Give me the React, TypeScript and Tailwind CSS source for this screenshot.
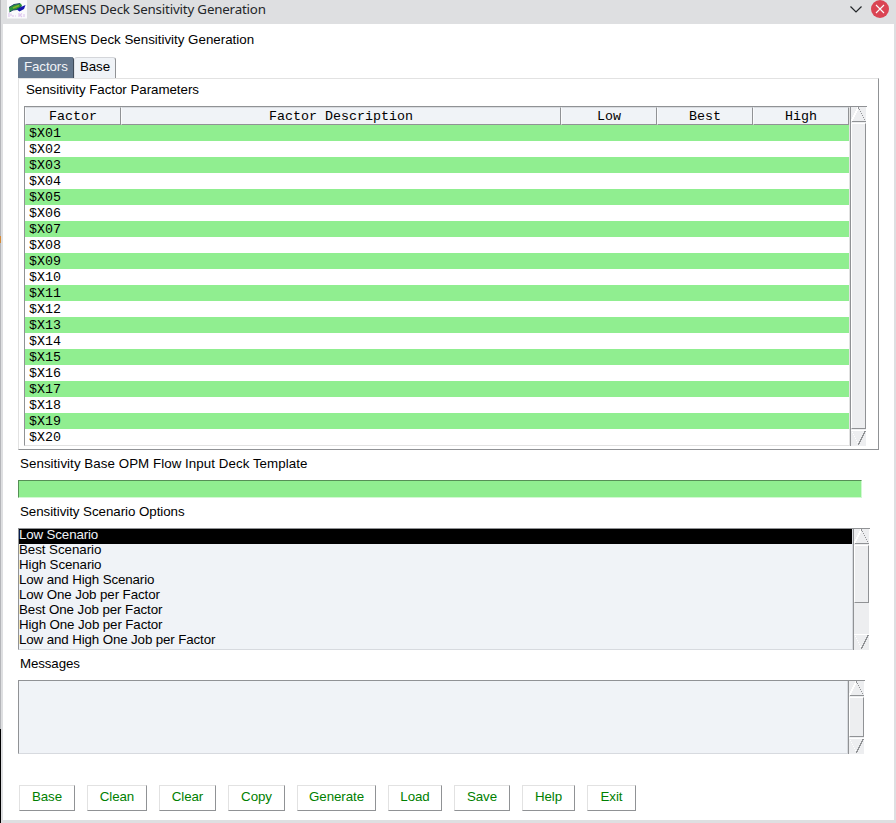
import React from "react";

const sans = "font-['Liberation_Sans',Arial,sans-serif] text-[13.33px] leading-[15px] whitespace-pre";
const mono = "font-['Liberation_Mono','Courier_New',monospace] text-[13.33px] whitespace-pre";

const factors = Array.from({ length: 20 }, (_, i) => "$X" + String(i + 1).padStart(2, "0"));

const columns = [
  { name: "Factor", width: "w-24" },
  { name: "Factor Description", width: "w-[440px]" },
  { name: "Low", width: "w-24" },
  { name: "Best", width: "w-24" },
  { name: "High", width: "w-24" },
];

const scenarios = [
  { name: "Low Scenario", spacing: "tracking-[-0.14px]" },
  { name: "Best Scenario", spacing: "tracking-[-0.05px]" },
  { name: "High Scenario", spacing: "tracking-[-0.1px]" },
  { name: "Low and High Scenario", spacing: "tracking-[-0.12px]" },
  { name: "Low One Job per Factor", spacing: "tracking-[-0.1px]" },
  { name: "Best One Job per Factor", spacing: "tracking-[-0.08px]" },
  { name: "High One Job per Factor", spacing: "tracking-[-0.11px]" },
  { name: "Low and High One Job per Factor", spacing: "tracking-[-0.12px]" },
];

const buttons = [
  { name: "Base", width: "w-14" },
  { name: "Clean", width: "w-[60px]" },
  { name: "Clear", width: "w-[57px]" },
  { name: "Copy", width: "w-[57px]" },
  { name: "Generate", width: "w-[79px]" },
  { name: "Load", width: "w-[54px]" },
  { name: "Save", width: "w-14" },
  { name: "Help", width: "w-[53px]" },
  { name: "Exit", width: "w-[49px]" },
];

const steps = [0, 1, 2, 3, 4, 5, 6];

function UpArrow() {
  return (
    <svg className="block shrink-0" width="15" height="15" viewBox="0 0 15 15" shapeRendering="crispEdges">
      {steps.map((k) => (
        <React.Fragment key={k}>
          <rect x={6 - k} y={2 * k} width="2" height="2" fill="#fff" />
          <rect x={7 + k} y={2 * k} width="1" height="1" fill="#909295" />
        </React.Fragment>
      ))}
      <rect x="7" y="0" width="1" height="2" fill="#909295" />
      <rect x="1" y="14" width="14" height="1" fill="#909295" />
    </svg>
  );
}

function DownArrow() {
  return (
    <svg className="block shrink-0" width="15" height="14" viewBox="0 0 15 14" shapeRendering="crispEdges">
      {steps.map((k) => (
        <React.Fragment key={k}>
          <rect x={1 + k} y={2 * k + 1} width="1" height="1" fill="#fff" />
          <rect x={13 - k} y={2 * k} width="1" height="2" fill="#909295" />
          <rect x={14 - k} y={2 * k} width="1" height="1" fill="#909295" />
        </React.Fragment>
      ))}
    </svg>
  );
}

function ScrollBar({ thumb }: { thumb: string }) {
  return (
    <div className="flex w-[17px] shrink-0 border-l border-[#909295]">
      <div className="flex w-[15px] flex-col justify-between bg-[#edeef0]">
        <div>
          <UpArrow />
          <div className={`mt-px border border-b-[#909295] border-l-white border-r-[#909295] border-t-white ${thumb}`} />
        </div>
        <div className="border-t border-white pb-px">
          <DownArrow />
        </div>
      </div>
    </div>
  );
}

function Logo() {
  return (
    <svg className="block" width="20" height="19" viewBox="0 0 20 19">
      <path d="M0 0H20V18.500H0Z" fill="#fafafc" />
      <path d="M2 7.500 7 4.500 14 3.500 15 6 11 9.500 6 10 2.500 12Z" fill="#2b9638" />
      <path d="M2 7.500 7 4.500 13 3.500" fill="none" stroke="#22496a" strokeWidth="1" />
      <path d="M6 8 12 5.500" stroke="#86b22c" strokeWidth="1.600" />
      <path d="M10 8.500 14 7 18.500 5 17 9 12.500 11.500 10.500 10Z" fill="#1515b0" />
      <path d="M2.500 12 6 10 10 9.500 14.500 6" fill="none" stroke="#1c4d60" strokeWidth="1" />
      <path d="M2 13V17M4 13.500V16M6 15V17M8 16H9M12 17V13M15 17 13 15 15 13.500M17 17V14" fill="none" stroke="#dfc9ef" strokeWidth="1.200" />
    </svg>
  );
}

function Tab({ label, active }: { label: string; active?: boolean }) {
  return active ? (
    <div className={`${sans} h-[21px] w-14 rounded-t-[3px] border-r border-[#3f4b59] bg-[#64778d] pl-1.5 pt-[2px] tracking-[-0.1px] text-[#f0f3f7]`}>{label}</div>
  ) : (
    <div className={`${sans} h-[21px] w-[42px] rounded-t-[3px] border-l border-r border-t border-l-[#e0e2e6] border-r-[#909295] border-t-[#d4d6da] bg-[#f0f3f7] pl-[5px] pt-px tracking-[-0.1px] text-black`}>{label}</div>
  );
}

export default function App() {
  return (
    <div className="flex h-[823px] w-[896px] overflow-hidden bg-[#dedfe1]">
      <div className="flex w-px shrink-0 flex-col">
        <div className="h-[236px] bg-[#b4b5b9]" />
        <div className="h-[7px] bg-[#d48a38]" />
        <div className="h-[486px] bg-[#b4b5b9]" />
        <div className="grow bg-black" />
      </div>
      <div className="flex grow flex-col">
        <header className="flex h-6 shrink-0 items-start">
          <div className="pl-[6px]">
            <Logo />
          </div>
          <div className="grow whitespace-pre pl-2 font-['Noto_Sans',sans-serif] text-[13.33px] leading-[19px] tracking-[-0.18px] text-[#232629]">OPMSENS Deck Sensitivity Generation</div>
          <svg className="block" width="46" height="20" viewBox="0 0 46 20" fill="none">
            <path d="M.5 6.500 6 12 11.500 6.500" stroke="#232629" strokeWidth="1.2" />
            <circle cx="30" cy="9" r="9" fill="#da4453" />
            <path d="M26 5 34 13M34 5 26 13" stroke="#fcfcfc" strokeWidth="1.1" />
          </svg>
        </header>
        <main className="ml-[2px] mr-[2px] flex h-[796px] shrink-0 flex-col items-start bg-white pl-[15px] text-black">
          <div className={`${sans} mt-2 pl-[2px]`}>OPMSENS Deck Sensitivity Generation</div>
          <div className="mt-[10px] flex h-[21px]">
            <Tab label="Factors" active />
            <Tab label="Base" />
          </div>
          <section className="h-[372px] w-[861px] border border-b-[#909295] border-l-[#e2e2e2] border-r-[#909295] border-t-[#e2e2e2] pl-[5px] pt-[3px]">
            <div className={`${sans} h-6 pl-[2px] tracking-[-0.04px]`}>Sensitivity Factor Parameters</div>
            <div className="flex h-[340px] w-[843px] border-t border-[#909295]">
              <div className="w-[826px] shrink-0 border-b border-l border-r border-b-[#e2e2e2] border-l-[#909295] border-r-[#e2e2e2]">
                <div className="flex h-[18px]">
                  {columns.map((c) => (
                    <div key={c.name} className={`${mono} ${c.width} shrink-0 border border-b-[#909295] border-l-[#fafbfd] border-r-[#909295] border-t-[#d9dce0] bg-[#f0f3f7] text-center leading-[18px]`}>{c.name}</div>
                  ))}
                </div>
                {factors.map((f, i) => (
                  <div key={f} className={`${mono} h-4 pl-1 leading-[18px] ${i % 2 === 0 ? "bg-[#90ee90]" : "bg-white"}`}>{f}</div>
                ))}
              </div>
              <ScrollBar thumb="h-[306px]" />
            </div>
          </section>
          <div className={`${sans} mt-[6px] pl-[2px] tracking-[0.055px]`}>Sensitivity Base OPM Flow Input Deck Template</div>
          <div className="mt-[9px] h-[18px] w-[844px] border border-b-[#d2f8d2] border-l-[#568f56] border-r-[#d2f8d2] border-t-[#568f56] bg-[#90ee90]" />
          <div className={`${sans} mt-[6px] pl-[2px] tracking-[-0.05px]`}>Sensitivity Scenario Options</div>
          <div className="mt-[9px] flex h-[122px] w-[852px] border-t border-[#909295]">
            <div className="w-[835px] shrink-0 border-b border-l border-r border-b-[#d7dadf] border-l-[#909295] border-r-[#d7dadf] bg-[#f0f3f7]">
              {scenarios.map((s, i) => (
                <div key={s.name} className={`flex h-[15px] ${i === 0 ? "bg-black text-[#f0f3f7]" : ""}`}>
                  <span className={`${sans} -mt-[2px] ${s.spacing}`}>{s.name}</span>
                </div>
              ))}
            </div>
            <ScrollBar thumb="h-[58px]" />
          </div>
          <div className={`${sans} mt-[6px] pl-[2px] tracking-[-0.12px]`}>Messages</div>
          <div className="mt-[9px] flex h-[74px] w-[847px] border-t border-[#909295]">
            <div className="w-[830px] shrink-0 border-b border-l border-r border-b-[#d7dadf] border-l-[#909295] border-r-[#d7dadf] bg-[#f0f3f7]" />
            <ScrollBar thumb="h-10" />
          </div>
          <div className="mt-[31px] flex gap-3 pl-px">
            {buttons.map((b) => (
              <button key={b.name} className={`${sans} ${b.width} h-[26px] border border-b-[#909295] border-l-[#e2e2e2] border-r-[#909295] border-t-[#e2e2e2] bg-white pb-[3px] tracking-[-0.08px] text-[#008000]`}>{b.name}</button>
            ))}
          </div>
        </main>
      </div>
    </div>
  );
}
